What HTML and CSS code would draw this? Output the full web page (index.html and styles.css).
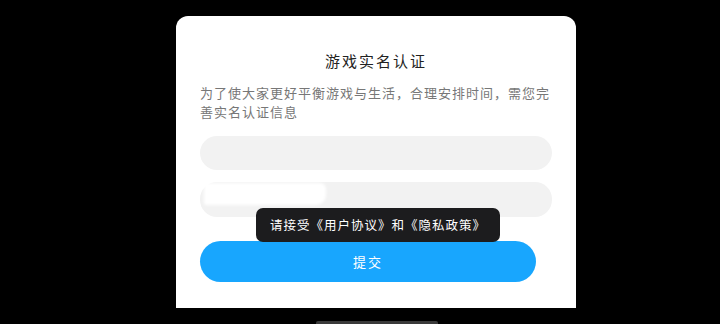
FILE: index.html
```html
<!DOCTYPE html>
<html lang="zh-CN">
<head>
    <meta charset="UTF-8">
    <meta name="viewport" content="width=device-width, initial-scale=1.0">
    <title>游戏实名认证</title>
    <link rel="stylesheet" href="styles.css">
</head>
<body>
    <div class="screen">
        <div class="dialog">
            <h1 class="title">游戏实名认证</h1>
            <p class="desc">为了使大家更好平衡游戏与生活，合理安排时间，需您完善实名认证信息</p>

            <div class="field"></div>
            <div class="field field-id">
                <span class="mask"></span>
            </div>

            <button class="submit">提交</button>

            <!-- Toast -->
            <div class="toast">请接受《用户协议》和《隐私政策》</div>
        </div>
        <div class="home-bar"></div>
    </div>
</body>
</html>
```

FILE: styles.css
```css
* {
    margin: 0;
    padding: 0;
    box-sizing: border-box;
}

body {
    background: #000;
    width: 720px;
    height: 324px;
    overflow: hidden;
    font-family: "Noto Sans CJK SC", "Noto Sans", sans-serif;
}

.screen {
    position: relative;
    height: 324px;
    display: flex;
    flex-direction: column;
    align-items: center;
    padding: 16px 0 0 32px;
}

.dialog {
    position: relative;
    width: 400px;
    height: 292px;
    background: #fff;
    border-radius: 12px 12px 0 0;
    padding: 0 24px;
    display: flex;
    flex-direction: column;
}

.title {
    margin-top: 34px;
    font-size: 15px;
    font-weight: 400;
    letter-spacing: 2px;
    line-height: 22px;
    color: #222;
    text-align: center;
}

.desc {
    margin-top: 11px;
    font-size: 13px;
    letter-spacing: 1px;
    line-height: 19px;
    color: #777;
}

.field {
    margin-top: 15px;
    height: 34px;
    border-radius: 17px;
    background: #f2f2f2;
}

.field-id {
    position: relative;
    margin-top: 12px;
    height: 35px;
}

/* verdeckter Platzhalter */
.mask {
    position: absolute;
    left: 4px;
    top: 1px;
    width: 122px;
    height: 22px;
    background: #fff;
    border-radius: 3px 6px 10px 2px;
    filter: blur(1.5px);
}

.submit {
    margin-top: 24px;
    width: 336px;
    height: 41px;
    border: none;
    border-radius: 21px;
    background: #18a6fe;
    color: #fff;
    font-family: inherit;
    font-size: 13px;
    letter-spacing: 2px;
}

.toast {
    position: absolute;
    left: 80px;
    top: 192px;
    width: 244px;
    height: 34px;
    border-radius: 7px;
    background: #1c1c1e;
    color: #fff;
    font-size: 12.5px;
    letter-spacing: 1px;
    line-height: 34px;
    text-align: center;
}

.home-bar {
    position: absolute;
    left: 316px;
    bottom: 0;
    width: 122px;
    height: 3px;
    border-radius: 2px 2px 0 0;
    background: #3a3a3a;
}
```
